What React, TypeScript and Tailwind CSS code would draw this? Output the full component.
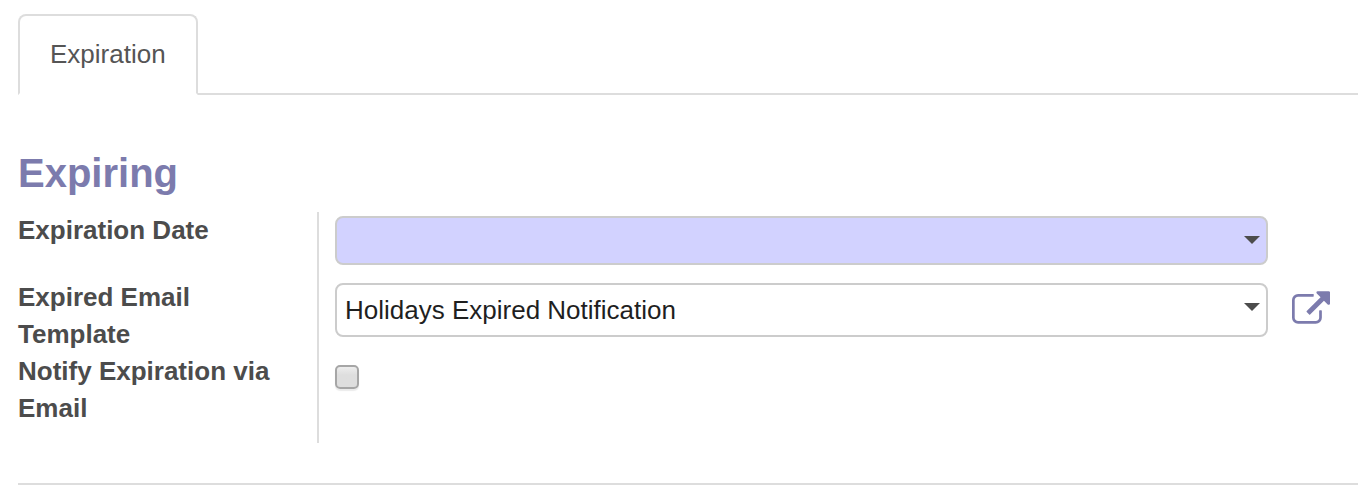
import { useState } from "react";

function Caret() {
  return (
    <svg
      viewBox="0 0 16 8"
      aria-hidden="true"
      className="pointer-events-none absolute top-5 right-2 h-2 w-4 fill-[#4c4c4c]"
    >
      <path d="M0 0h16L8 8z" />
    </svg>
  );
}

function ExternalLinkIcon() {
  return (
    <svg viewBox="0 0 1792 1536" aria-hidden="true" className="h-[33px] w-[38px] fill-[#7c7bad]">
      <path d="M1408 928v320q0 119-84.5 203.5t-203.5 84.5h-832q-119 0-203.5-84.5t-84.5-203.5v-832q0-119 84.5-203.5t203.5-84.5h704q14 0 23 9t9 23v64q0 14-9 23t-23 9h-704q-66 0-113 47t-47 113v832q0 66 47 113t113 47h832q66 0 113-47t47-113v-320q0-14 9-23t23-9h64q14 0 23 9t9 23zm384-864v512q0 26-19 45t-45 19-45-19l-176-176-652 652q-10 10-23 10t-23-10l-114-114q-10-10-10-23t10-23l652-652-176-176q-19-19-19-45t19-45 45-19h512q26 0 45 19t19 45z" />
    </svg>
  );
}

export default function App() {
  const [date, setDate] = useState("");
  const [notify, setNotify] = useState(false);

  return (
    <main className="bg-white pt-3.5 pb-2 pl-[18px] font-['Liberation_Sans',Arial,sans-serif] text-[26px] leading-[37px] text-[#4c4c4c]">
      <div role="tablist" className="flex border-b-2 border-[#ddd]">
        <button
          type="button"
          role="tab"
          aria-selected="true"
          className="-mb-0.5 rounded-t-lg border-2 border-[#ddd] border-b-white bg-white px-[30px] py-5 text-[#555]"
        >
          Expiration
        </button>
      </div>

      <section role="tabpanel" className="border-b-2 border-[#ddd] pt-14 pb-10">
        <h2 className="mb-4 text-[40px] leading-[45px] font-bold text-[#7c7bad]">Expiring</h2>

        <div className="grid grid-cols-[299px_1fr]">
          <label htmlFor="expiration-date" className="pr-8 font-bold">
            Expiration Date
          </label>
          <div className="border-l-2 border-[#ddd] pt-1 pr-[90px] pb-3.5 pl-4">
            <div className="relative">
              <input
                id="expiration-date"
                type="text"
                value={date}
                onChange={(e) => setDate(e.target.value)}
                className="block h-[49px] w-full rounded-lg border-2 border-[#ccc] bg-[#d2d2ff] pr-8 pl-2 text-[#1f1f1f]"
              />
              <Caret />
            </div>
          </div>

          <label htmlFor="email-template" className="pr-8 font-bold">
            Expired Email Template
          </label>
          <div className="flex items-start gap-6 border-l-2 border-[#ddd] pt-1 pr-7 pb-4 pl-4">
            <div className="relative flex-1">
              <select
                id="email-template"
                className="block h-[54px] w-full appearance-none rounded-lg border-2 border-[#ccc] bg-white pr-8 pl-2 text-[#1f1f1f]"
              >
                <option>Holidays Expired Notification</option>
              </select>
              <Caret />
            </div>
            <button type="button" aria-label="Open template" className="mt-2">
              <ExternalLinkIcon />
            </button>
          </div>

          <label htmlFor="notify-email" className="pr-8 pb-4 font-bold">
            Notify Expiration via Email
          </label>
          <div className="border-l-2 border-[#ddd] pt-3 pl-4">
            <input
              id="notify-email"
              type="checkbox"
              checked={notify}
              onChange={(e) => setNotify(e.target.checked)}
              className="block size-6 appearance-none rounded-[5px] border-2 border-[#a6a6a6] bg-linear-to-b from-[#ededed] from-0% via-[#dedede] via-40% to-[#dedede] shadow-[0_2px_1px_rgba(0,0,0,0.08)] checked:from-[#7c7bad] checked:via-[#7c7bad] checked:to-[#7c7bad]"
            />
          </div>
        </div>
      </section>
    </main>
  );
}
